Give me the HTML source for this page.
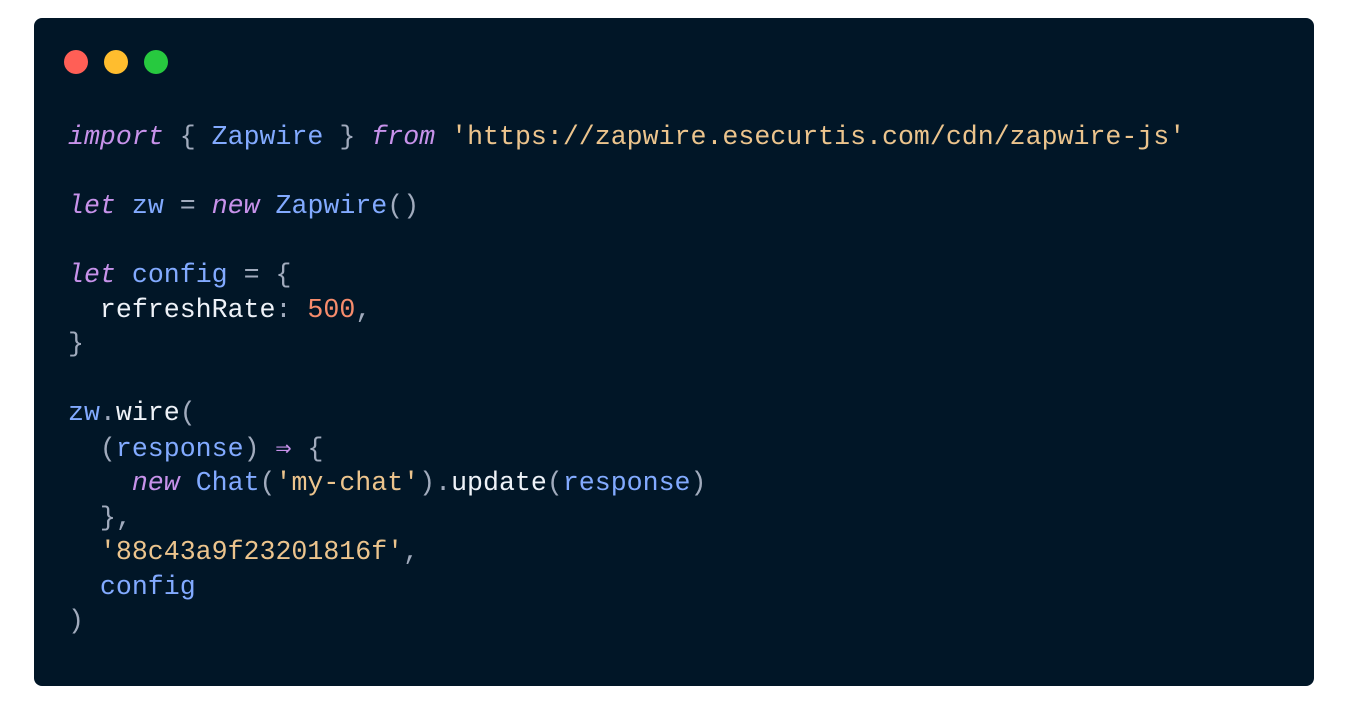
<!DOCTYPE html>
<html><head><meta charset="utf-8"><style>
html,body{margin:0;padding:0;background:#fff;width:1348px;height:704px;overflow:hidden}
.card{position:absolute;left:34px;top:18px;width:1280px;height:668px;background:#011627;border-radius:8px}
.dot{position:absolute;top:32px;width:24px;height:24px;border-radius:50%}
pre{position:absolute;left:34px;top:102px;margin:0;font-family:"Liberation Mono","DejaVu Sans Mono",monospace;font-size:26.6px;line-height:34.5px;color:#d6deeb;letter-spacing:0}
.k{color:#c792ea;font-style:italic}.b{color:#82aaff}.p{color:#a1abbd}.s{color:#ecc48d}.n{color:#f78c6c}.w{color:#eef2f8}
.ar{color:#c792ea;font-family:"DejaVu Sans Mono",monospace}
</style></head><body>
<div class="card">
<div class="dot" style="left:30px;background:#ff5f56"></div>
<div class="dot" style="left:70px;background:#ffbd2e"></div>
<div class="dot" style="left:110px;background:#27c93f"></div>
<pre><span class="k">import</span> <span class="p">{</span> <span class="b">Zapwire</span> <span class="p">}</span> <span class="k">from</span> <span class="s">'https://zapwire.esecurtis.com/cdn/zapwire-js'</span>

<span class="k">let</span> <span class="b">zw</span> <span class="p">=</span> <span class="k">new</span> <span class="b">Zapwire</span><span class="p">()</span>

<span class="k">let</span> <span class="b">config</span> <span class="p">=</span> <span class="p">{</span>
  <span class="w">refreshRate</span><span class="p">:</span> <span class="n">500</span><span class="p">,</span>
<span class="p">}</span>

<span class="b">zw</span><span class="p">.</span><span class="w">wire</span><span class="p">(</span>
  <span class="p">(</span><span class="b">response</span><span class="p">)</span> <span class="ar">⇒</span> <span class="p">{</span>
    <span class="k">new</span> <span class="b">Chat</span><span class="p">(</span><span class="s">'my-chat'</span><span class="p">).</span><span class="w">update</span><span class="p">(</span><span class="b">response</span><span class="p">)</span>
  <span class="p">},</span>
  <span class="s">'88c43a9f23201816f'</span><span class="p">,</span>
  <span class="b">config</span>
<span class="p">)</span></pre>
</div>
</body></html>
